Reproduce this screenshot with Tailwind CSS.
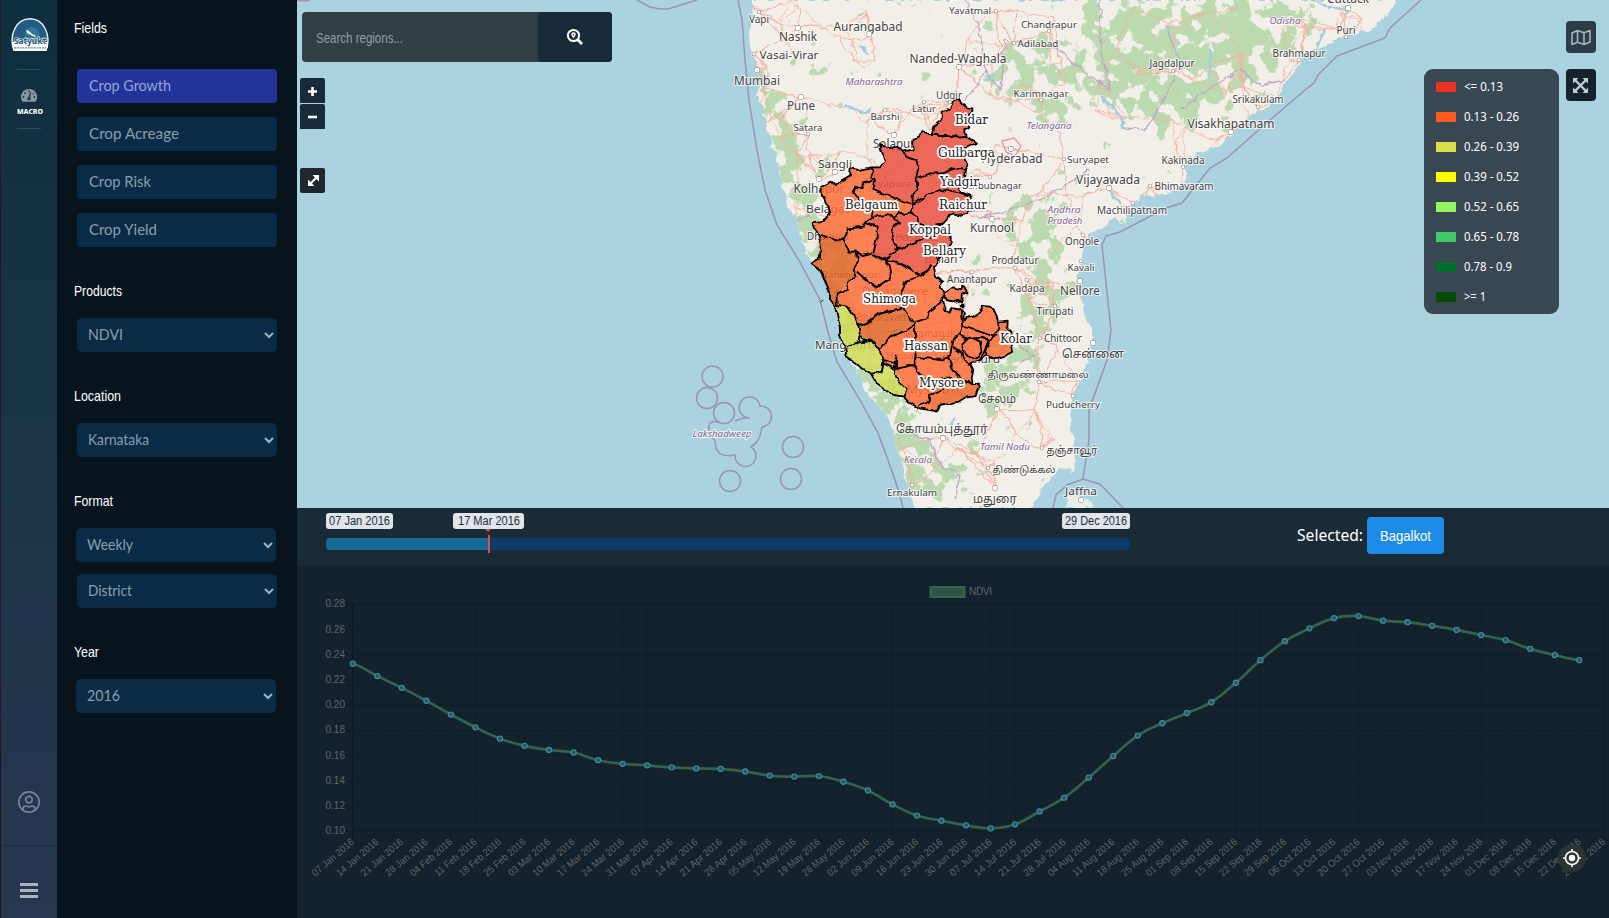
<!DOCTYPE html>
<html lang="en">
<head>
<meta charset="utf-8">
<title>Crop Growth</title>
<script src="https://cdn.jsdelivr.net/npm/@tailwindcss/browser@4"></script>
</head>
<body class="flex h-screen w-screen overflow-hidden bg-[#07141e] font-['Liberation_Sans',sans-serif]">

<nav class="flex h-full w-[57px] shrink-0 flex-col items-center border-l border-[#2a1620] bg-linear-to-b from-[#0e2f3f] via-[#1b3448] to-[#28364f]">
  <svg class="mt-[18px] ml-[1px] shrink-0" width="38" height="33" viewBox="0 0 38 33">
    <path d="M3 32.5C-3 16 6 .8 19 .8S41 16 35 32.5Z" fill="#245b83" stroke="#eef3f6" stroke-width="1.4"/>
    <circle cx="21" cy="16" r="7" fill="#3c82a3" opacity=".7"/>
    <path d="M15 12l3 1 3 3 4 2-1 1-4-2-4-2z" fill="#fff"/>
    <path d="M1 24H37V29L35 32.5H3L1 28Z" fill="#fff"/>
    <text x="3" y="25.500" textLength="32" lengthAdjust="spacingAndGlyphs" font-family="Noto Sans, sans-serif" font-weight="700" font-size="9.500" fill="#235173" stroke="#fff" stroke-width="1.2" paint-order="stroke">Satyukt</text>
    <path d="M3 29.8H35" stroke="#5f8aa3" stroke-width="1.3" stroke-dasharray="2 .8"/>
  </svg>
  <div class="mt-[18px] h-px w-6 bg-[#2f4d5c]"></div>
  <svg class="mt-[19px] shrink-0" width="16" height="13" viewBox="0 0 16 13">
    <path d="M8 0a8 8 0 0 1 6.9 12.1q-.3.6-1 .6H2.100q-.7 0-1-.6A8 8 0 0 1 8 0Z" fill="#8797a2"/>
    <g fill="#18384a"><circle cx="8" cy="2.400" r=".9"/><circle cx="4" cy="4.200" r=".9"/><circle cx="2.400" cy="8" r=".9"/><circle cx="13.500" cy="8" r=".9"/><circle cx="12.300" cy="4.800" r=".8"/><circle cx="8" cy="9.800" r="1.700"/></g>
    <path d="M8 9.500L9.600 3.500" stroke="#18384a" stroke-width="1.300"/>
  </svg>
  <div class="mt-[4px] ml-[2px] flex h-3 items-center font-['Noto_Sans',sans-serif] text-[7.500px] leading-3 font-extrabold text-white"><span data-w="26">MACRO</span></div>
  <div class="mt-[10px] h-px w-6 bg-[#2f4d5c]"></div>
  <div class="grow"></div>
  <svg class="shrink-0" width="24" height="24" viewBox="0 0 24 24" fill="none" stroke="#73839a" stroke-width="1.700">
    <circle cx="12" cy="12" r="10.200"/><circle cx="12" cy="9.600" r="3.300"/><path d="M5.500 19.500q.5-3.500 3.500-3.500l3 .8 3-.8q3 0 3.500 3.500"/>
  </svg>
  <div class="mt-[31px] h-px w-full bg-[#1d2c43]"></div>
  <div class="mt-[37px] mb-5 flex flex-col gap-[3px]">
    <i class="block h-[3px] w-[18px] bg-[#a9b2bd]"></i><i class="block h-[3px] w-[18px] bg-[#a9b2bd]"></i><i class="block h-[3px] w-[18px] bg-[#a9b2bd]"></i>
  </div>
</nav>

<aside class="flex h-full w-[240px] shrink-0 flex-col bg-[#07141e] pl-[17px] text-white">
  <h2 class="mt-4 flex h-6 items-center text-[14.500px]"><span data-w="33">Fields</span></h2>
  <div class="mt-[29px] ml-[3px] flex w-[200px] flex-col gap-[14px] font-['Lato',sans-serif] text-[15px] text-[#8b9eac]">
    <button class="flex h-[34px] items-center rounded-[4px] bg-[#233399] pl-3 text-[#9ba3d3]"><span data-w="82">Crop Growth</span></button>
    <button class="flex h-[34px] items-center rounded-[4px] bg-[#0a2b45] pl-3"><span data-w="90">Crop Acreage</span></button>
    <button class="flex h-[34px] items-center rounded-[4px] bg-[#0a2b45] pl-3"><span data-w="62">Crop Risk</span></button>
    <button class="flex h-[34px] items-center rounded-[4px] bg-[#0a2b45] pl-3"><span data-w="68">Crop Yield</span></button>
  </div>
  <h2 class="mt-8 flex h-6 items-center text-[14.500px]"><span data-w="48">Products</span></h2>
  <div class="sel mt-[15px] ml-[3px] flex h-[34px] w-[200px] items-center justify-between rounded-[5px] bg-[#0a2b45] pr-[3px] pl-[11px] font-['Lato',sans-serif] text-[15px] text-[#8b9eac]"><span data-w="35">NDVI</span></div>
  <h2 class="mt-8 flex h-6 items-center text-[14.500px]"><span data-w="47">Location</span></h2>
  <div class="sel mt-[15px] ml-[3px] flex h-[34px] w-[200px] items-center justify-between rounded-[5px] bg-[#0a2b45] pr-[3px] pl-[11px] font-['Lato',sans-serif] text-[15px] text-[#8b9eac]"><span data-w="61">Karnataka</span></div>
  <h2 class="mt-8 flex h-6 items-center text-[14.500px]"><span data-w="39">Format</span></h2>
  <div class="sel mt-[15px] ml-[2px] flex h-[34px] w-[200px] items-center justify-between rounded-[5px] bg-[#0a2b45] pr-[3px] pl-[11px] font-['Lato',sans-serif] text-[15px] text-[#8b9eac]"><span data-w="46">Weekly</span></div>
  <div class="sel mt-3 ml-[3px] flex h-[34px] w-[200px] items-center justify-between rounded-[5px] bg-[#0a2b45] pr-[3px] pl-[11px] font-['Lato',sans-serif] text-[15px] text-[#8b9eac]"><span data-w="44">District</span></div>
  <h2 class="mt-8 flex h-6 items-center text-[14.500px]"><span data-w="25">Year</span></h2>
  <div class="sel mt-[15px] ml-[2px] flex h-[34px] w-[200px] items-center justify-between rounded-[5px] bg-[#0a2b45] pr-[3px] pl-[11px] font-['Lato',sans-serif] text-[15px] text-[#8b9eac]"><span data-w="33">2016</span></div>
</aside>

<main class="flex h-full min-w-0 flex-1 flex-col">
  <section class="relative h-[508px] shrink-0 overflow-hidden bg-[#abd3df]">
    <svg class="block" width="1312" height="508" viewBox="297 0 1312 508">
      <defs>
        <filter id="rough" filterUnits="userSpaceOnUse" x="700" y="-20" width="760" height="560"><feTurbulence type="fractalNoise" baseFrequency=".12" numOctaves="2" seed="4"/><feDisplacementMap in="SourceGraphic" scale="7" xChannelSelector="R" yChannelSelector="G"/></filter>
        <filter id="ragged" filterUnits="userSpaceOnUse" x="-40" y="0" width="900" height="1100"><feTurbulence type="fractalNoise" baseFrequency=".05" numOctaves="1" seed="9"/><feDisplacementMap in="SourceGraphic" scale="17" xChannelSelector="R" yChannelSelector="G"/></filter>
        <filter id="woods" filterUnits="userSpaceOnUse" x="700" y="0" width="720" height="508">
          <feGaussianBlur in="SourceAlpha" stdDeviation="9" result="a"/>
          <feTurbulence type="fractalNoise" baseFrequency=".06" numOctaves="5" seed="12" result="n"/>
          <feColorMatrix in="n" values="0 0 0 0 0  0 0 0 0 0  0 0 0 0 0  1 0 0 0 0" result="m"/>
          <feComposite in="a" in2="m" operator="arithmetic" k1="0" k2=".42" k3="1.150" k4="-.32"/>
          <feComponentTransfer result="t"><feFuncA type="linear" slope="14" intercept="-7.500"/></feComponentTransfer>
          <feFlood flood-color="#bcdab0"/><feComposite in2="t" operator="in"/>
        </filter>
        <clipPath id="land"><path d="M752 0L753 20 748 35 752 55 757 70 760 85 757 95 763 110 768 130 772 145 778 165 783 185 788 205 797 222 800 235 806 250 812 265 829 280 835 303 842 330 847 352 857 372 866 392 877 404 885 412 893 432 897 450 903 465 908 485 914 508H1031L1045 483 1052 475 1060 468 1074 471 1075 445 1072 430 1071 410 1073 395 1080 380 1088 360 1093 343 1092 330 1085 318 1081 297 1078 277 1083 251 1088 234 1102 228 1117 217 1120 223 1127 222 1128 213 1135 203 1140 196 1160 195 1180 189 1187 179 1187 170 1182 160 1195 155 1220 145 1233 133 1250 115 1268 107 1275 98 1285 85 1295 72 1303 58 1310 52 1325 45 1345 36 1372 30 1380 20 1390 12 1396 0Z"/></clipPath>
      </defs>
      <g filter="url(#rough)"><rect x="740" y="-10" width="670" height="530" fill="#f2efe9" clip-path="url(#land)"/></g>
      <g clip-path="url(#land)">
        <g filter="url(#woods)" fill="#000">
          <path d="M1085 0H1320L1290 60 1220 110 1160 140 1090 90 1070 40Z"/>
          <path d="M1110 0H1220L1200 80 1110 60Z"/>
          <path d="M750 60L785 90 830 220 880 370 920 410 940 500 910 500 870 400 830 320 790 220 765 140Z"/>
          <path d="M980 60L1050 30 1090 90 1060 130 1000 100Z" opacity=".8"/>
          <path d="M1000 215L1060 170 1070 300 1040 380 1000 420 960 400 990 340 1030 290Z" opacity=".8"/>
          <path d="M915 455L985 460 980 480 950 485 920 475Z"/><path d="M900 10H930V-10H900Z"/><path d="M810 55L840 60 830 75 800 70Z"/>
        </g>
        <g id="roads" fill="none" stroke="#f5ae9d" stroke-width=".9" opacity=".95" filter="url(#rough)"></g>
        <path d="M965 0L980 30 985 70 978 85 960 105 945 100M985 70L1000 90 1005 40 1060 50 1080 70 1110 90 1100 40 1100 0M1165 25L1180 60 1170 90 1145 130 1125 128M1180 110L1215 85 1240 70 1260 85 1285 80M790 225L810 215M1000 220L980 218 1040 200 1090 170M1015 345L1035 355 1020 362M905 430L930 440 940 465 960 475 955 500" fill="none" stroke="#c0a8c5" stroke-width="1.400" filter="url(#rough)"/>
        <path d="M1100 95L1120 115 1125 130M1210 50V80M860 45L870 55M845 105L860 112 870 110M995 75L985 80M1110 188L1120 205M1310 0L1350 12M1325 30L1317 48M955 418L950 425" fill="none" stroke="#9fcfdf" stroke-width="2.500" filter="url(#rough)"/>
        <path d="M1002 141L1014 138 1021 146 1015 156 1006 152Z" fill="none" stroke="#ea92a5" stroke-width="1.300"/>
      </g>
      <path d="M1065 508L1070 494 1088 499 1093 508" fill="#e6eee8" filter="url(#rough)"/>
      <g fill="none" stroke="#9a93b3" stroke-width="1.500">
        <path d="M738 0L742 20 745 60 749 100 757 150 765 190 777 225 800 262 820 300 828 332 837 362 860 400 878 433 888 460 900 495 903 508M1421 0L1390 28 1385 38 1337 56 1318 75 1314 83 1305 90 1270 120 1227 158 1210 168 1182 203 1166 208 1120 232 1106 236 1102 245 1111 330 1107 360 1089 410 1089 440 1083 479M1053 508L1056 495 1067 485 1083 479 1100 484 1123 508M637 0L650 7 660 9 668 9 697 0M297 0Q303 2 310 0"/>
        <circle cx="712.500" cy="376.500" r="10.500"/><circle cx="707" cy="398" r="10.500"/><circle cx="793" cy="447" r="10.500"/><circle cx="791" cy="479" r="10.500"/><circle cx="730" cy="481" r="10.500"/><circle cx="724" cy="413" r="10.500"/>
        <path d="M750 418A10.500 10.500 0 1 1 760 406A10.500 10.500 0 1 1 762 427C760 440 756 444 751 447A10.500 10.500 0 1 1 735 455Q715 459 715 441Q706 430 710 423Q716 420 720 423M735 421Q746 417 750 418"/>
      </g>
      <g id="cities" font-family="'Noto Sans','Noto Sans Tamil',sans-serif" fill="#43403e" stroke="#fff" stroke-opacity=".75" stroke-width="2" paint-order="stroke" text-anchor="middle"></g>

      <g transform="translate(780 80) scale(.33333)" filter="url(#ragged)">
        <clipPath id="kar"><path id="ko" d="M537 58L548 72 560 82 575 85 572 105 560 120 568 140 556 150 556 168 575 178 588 188 570 198 555 205 545 225 555 240 562 255 558 270 555 290 535 320 545 338 575 348 565 360 562 375 565 400 545 405 520 400 505 405 500 420 480 435 500 455 512 470 512 490 505 515 470 535 472 552 462 560 468 590 490 605 478 620 492 640 485 660 495 670 492 690 510 698 520 685 545 690 555 700 553 718 575 710 605 695 605 678 630 680 648 700 655 725 683 722 682 745 695 760 690 785 697 815 680 825 660 832 640 835 620 825 605 840 585 845 570 850 580 870 575 895 578 912 590 912 600 920 590 945 560 950 535 965 500 970 480 975 470 995 450 990 420 985 400 975 385 965 370 950 340 945 320 930 290 910 272 880 240 860 200 832 195 800 180 770 180 740 170 700 165 680 150 660 150 640 135 600 120 570 95 550 120 535 122 490 115 465 100 440 98 430 130 425 150 400 145 380 125 345 125 320 155 305 165 315 210 290 212 265 240 270 270 262 300 262 315 245 300 195 325 205 350 200 370 215 400 208 400 180 430 155 455 165 460 140 485 120 485 95 510 85 520 65Z"/></clipPath>
        <g clip-path="url(#kar)" opacity=".84">
          <rect x="80" y="40" width="640" height="970" fill="#ff6d38"/>
          <path d="M120 462L190 480 205 515 230 515 235 540 225 590 205 605 170 640 170 680 90 640 80 500Z" fill="#e46428"/>
          <path d="M235 735L300 700 370 685 405 728 330 770 300 810 240 770Z" fill="#e46428"/>
          <path d="M450 960L450 945 490 930 540 905 610 905 600 960 470 1000Z" fill="#f0662d"/>
          <path d="M270 262L315 245 290 190 400 140 500 50 600 80 600 420 500 430 530 520 470 535 455 555 420 585 380 560 310 540 275 525 290 480 290 440 262 420 345 408 395 400 395 372 280 330 285 300Z" fill="#eb503f"/>
          <path d="M150 678L200 680 230 730 240 768 275 780 300 815 310 848 340 865 345 830 350 880 380 930 370 955 270 920 180 850 150 720Z" fill="#d1dc54"/>
        </g>
        <g fill="none" stroke="#000" stroke-width="5.500" stroke-linejoin="round">
          <use href="#ko"/>
          <path d="M455 165L500 165 530 170 556 168M370 215L375 230 410 240 415 265 410 290 412 330 398 345 398 372M415 295L450 280 490 280 520 265 558 270M400 372L440 345 480 330 530 335 575 348M398 372L395 400 415 410 410 430 450 440 480 435M270 262L280 275 270 290 285 300 280 330 330 350 395 372M285 295L250 310 245 325 225 320 220 340 235 350 240 370 275 390 280 410 320 405 345 410 355 395 370 405 395 400M120 465L150 475 190 480 200 460 200 445 250 440 260 425 280 412M260 430L290 440 290 480 280 520M340 415L360 430 340 440 335 470 350 505 340 520 310 540 275 525M190 480L200 500 205 515 230 515 245 525 275 518M230 515L235 540 225 565 225 590 205 605 200 630 170 640 170 675 200 680 225 710 235 735 240 768 235 785 200 800M340 505L380 500 420 480 480 460M230 575L260 600 290 625 310 610 325 600 330 570 320 545M310 540L350 545 380 560 420 585 440 575 455 555M420 585L380 605 365 640 370 680 400 725 410 725 440 715 455 690 485 660M235 735L260 730 300 700 350 690 370 680M200 800L235 785 275 780 300 815 310 845 305 875 272 882M240 770L280 790M300 810L330 770 370 755 410 730M310 840L345 850 355 865 400 855 410 825 405 790 405 735M305 875L310 850 340 865 350 830 345 880 360 910 380 930 370 950M400 855L410 870 430 895 470 900M545 690L550 740 540 760 520 780 515 800 510 830 480 840 410 830M548 740L600 755 640 770 655 745 655 725M540 765L560 775 600 770 625 780 610 820 600 840M550 790L570 770 600 785 605 815 590 835 560 825 545 810ZM520 800L545 820 550 840 570 850M505 835L520 870 550 900 578 912M415 975L450 960 450 945 490 930 480 900 500 895 540 900 578 912M655 765L635 775 615 810 620 825"/>
          <path d="M490 640L520 622 545 628 547 620 562 628 562 640 545 645 545 660 525 665 500 660Z" fill="#fc8053"/>
          <path d="M543 670l8 2-2 10-7-4zM126 662l3 2"/>
        </g>
      </g>
      <g id="dist" font-family="'DejaVu Serif',serif" font-size="13" fill="#222" stroke="#fff" stroke-width="3.500" stroke-linejoin="round" paint-order="stroke"></g>
    </svg>

    <div class="absolute top-3 left-[5px] flex h-[50px] w-[310px] rounded-[4px] bg-[#313f45]">
      <div class="flex flex-1 items-center pt-[2px] pl-[14px] text-[15px] text-[#929b9f]"><span data-w="87">Search regions...</span></div>
      <div class="flex w-[74px] items-center justify-center rounded-[4px] bg-[#192b3a]">
        <svg width="18" height="18" viewBox="0 0 18 18" fill="none" stroke="#fff"><circle cx="7.500" cy="7.500" r="5.600" stroke-width="2"/><path d="M11.500 11.500L16 16" stroke-width="2.800"/><path d="M7.500 10.500Q5.200 7.800 5.200 6.600a2.300 2.300 0 0 1 4.600 0Q9.800 7.800 7.500 10.500Z" fill="#fff" stroke="none"/><circle cx="7.500" cy="6.700" r=".8" fill="#192b3a" stroke="none"/></svg>
      </div>
    </div>
    <div class="absolute top-[78px] left-[3px] flex w-[25px] flex-col gap-px">
      <div class="flex h-[25px] items-center justify-center rounded-t-[2px] bg-[#192b3a] pt-[2px]"><svg width="9" height="9"><path d="M0 4.500H9M4.500 0V9" stroke="#fff" stroke-width="2.600"/></svg></div>
      <div class="flex h-[25px] items-center justify-center rounded-t-[2px] bg-[#192b3a]"><svg width="9" height="9"><path d="M0 5H9" stroke="#fff" stroke-width="2.600"/></svg></div>
    </div>
    <div class="absolute top-[168px] left-[3px] flex h-[25px] w-[25px] items-center justify-center rounded-[2px] bg-[#20282e]">
      <svg class="ml-px" width="11" height="11" viewBox="0 0 11 11"><path d="M2 9L9 2" stroke="#fff" stroke-width="2.200"/><path d="M4.500 0H11V6.500ZM0 4.500V11H6.500Z" fill="#fff"/></svg>
    </div>

    <div class="absolute top-[21px] right-[13px] flex w-[30px] flex-col gap-4">
      <div class="flex h-8 items-center justify-center rounded-[4px] bg-[#2c3d49]"><svg width="20" height="17" viewBox="0 0 20 17" fill="none" stroke="#a8b3bc" stroke-width="1.600" stroke-linejoin="round"><path d="M1 4L6.500 1.500 13 3.800 19 1.500V13L13 15.500 6.500 13.200 1 15.500ZM6.500 1.500V13M13 4V15.500"/></svg></div>
      <div class="flex h-8 items-center justify-center rounded-[4px] bg-[#15232d] pr-px"><svg width="15" height="15" viewBox="0 0 15 15"><path d="M2 2L13 13M13 2L2 13" stroke="#c2ccd3" stroke-width="2.400"/><path d="M0 0H5.500L0 5.500ZM15 0V5.500L9.500 0ZM0 15V9.500L5.500 15ZM15 15H9.500L15 9.500Z" fill="#c2ccd3"/></svg></div>
    </div>

    <div class="absolute top-[69px] right-[50px] flex h-[245px] w-[135px] flex-col rounded-[9px] bg-[#394753] pt-[3px] pl-3 font-['Noto_Sans',sans-serif] text-[12px] text-white">
      <div class="flex h-[29.950px] items-center gap-2"><i class="mt-px h-[10px] w-5 bg-[#ea3323]"></i><span data-w="39">&lt;= 0.13</span></div>
      <div class="flex h-[29.950px] items-center gap-2"><i class="mt-px h-[10px] w-5 bg-[#fc5a20]"></i><span data-w="55">0.13 - 0.26</span></div>
      <div class="flex h-[29.950px] items-center gap-2"><i class="mt-px h-[10px] w-5 bg-[#dede4b]"></i><span data-w="55">0.26 - 0.39</span></div>
      <div class="flex h-[29.950px] items-center gap-2"><i class="mt-px h-[10px] w-5 bg-[#ffff00]"></i><span data-w="55">0.39 - 0.52</span></div>
      <div class="flex h-[29.950px] items-center gap-2"><i class="mt-px h-[10px] w-5 bg-[#94f45a]"></i><span data-w="55">0.52 - 0.65</span></div>
      <div class="flex h-[29.950px] items-center gap-2"><i class="mt-px h-[10px] w-5 bg-[#41ca69]"></i><span data-w="55">0.65 - 0.78</span></div>
      <div class="flex h-[29.950px] items-center gap-2"><i class="mt-px h-[10px] w-5 bg-[#006d2c]"></i><span data-w="48">0.78 - 0.9</span></div>
      <div class="flex h-[29.950px] items-center gap-2"><i class="mt-px h-[10px] w-5 bg-[#064a06]"></i><span data-w="22">&gt;= 1</span></div>
    </div>
  </section>

  <section class="flex h-[58px] shrink-0 bg-[#1a2b38] pl-[29px]">
    <div class="relative w-[804px] pt-[5px]">
      <div class="flex justify-between text-[12px] leading-4 text-[#24313c]">
        <span class="flex h-4 w-[67px] items-center justify-center rounded-[3px] bg-[#e1e4e9]"><span data-w="61">07 Jan 2016</span></span>
        <span class="flex h-4 w-[68px] items-center justify-center rounded-[3px] bg-[#e1e4e9]"><span data-w="62">29 Dec 2016</span></span>
      </div>
      <div class="mt-[9px] h-3 overflow-hidden rounded-[4px] bg-[#0b3d66]"><div class="h-full w-[163px] bg-[#146a93]"></div></div>
      <span class="absolute top-[5px] left-[127px] flex h-4 w-[71px] items-center justify-center rounded-[3px] bg-[#e1e4e9] text-[12px] text-[#24313c]"><span data-w="62">17 Mar 2016</span></span>
      <svg class="absolute top-[21px] left-[159px]" width="7" height="3"><path d="M0 0H6L3 3Z" fill="#e8464f"/></svg>
      <i class="absolute top-[27px] left-[162px] h-[18px] w-[2px] bg-[#e8464f]"></i>
    </div>
    <div class="ml-[167px] flex items-start pt-[9px]">
      <div class="flex h-[37px] w-[70px] items-center font-['Noto_Sans',sans-serif] text-[16px] text-white"><span data-w="66">Selected:</span></div>
      <div class="flex h-[37px] w-[77px] items-center justify-center rounded-[4px] bg-[#1d8ce8] text-[15.500px] text-white"><span data-w="51">Bagalkot</span></div>
    </div>
  </section>

  <section class="relative min-h-0 flex-1 bg-[#13222d]">
    <svg id="chart" class="block" width="1312" height="352" viewBox="297 566 1312 352" font-family="'Liberation Sans',sans-serif" font-size="10" fill="#626466"></svg>
    <div class="absolute top-[278px] left-[1261px] flex h-7 w-7 items-center justify-center rounded-full bg-[#2b3430]">
      <svg width="18" height="18" viewBox="0 0 18 18" fill="none" stroke="#fff" stroke-width="1.600"><circle cx="9" cy="9" r="6.500"/><circle cx="9" cy="9" r="3.200" fill="#fff" stroke="none"/><path d="M9 0V3M9 15V18M0 9H3M15 9H18"/></svg>
    </div>
  </section>
</main>

<script>
const NS = 'http://www.w3.org/2000/svg';
function add(parent, tag, attrs, text) {
  const e = document.createElementNS(NS, tag);
  for (const k in attrs) e.setAttribute(k, attrs[k]);
  if (text !== undefined) e.textContent = text;
  parent.appendChild(e);
  return e;
}
document.querySelectorAll('[data-w]').forEach(el => {
  const t = el.textContent, w = el.dataset.w;
  el.textContent = '';
  el.style.flexShrink = 0;
  const s = add(el, 'svg', { width: w, height: '1em', style: 'display:block;overflow:visible' });
  add(s, 'text', { x: 0, y: '.83em', textLength: w, lengthAdjust: 'spacingAndGlyphs', fill: 'currentColor' }, t);
});
document.querySelectorAll('.sel').forEach(s => {
  const v = add(s, 'svg', { width: 10, height: 7, viewBox: '0 0 10 7' });
  add(v, 'path', { d: 'M1 1L5 5 9 1', fill: 'none', stroke: '#a3b2bf', 'stroke-width': 2 });
});

// [name, x centre, baseline, width, size, dot x, dot y]
const cities = [
  ['Vapi',759,23,20,10,759,12],['Aurangabad',868,31,69,12.5,869,34],['Yavatmal',970,14,42,9.5,996,11],['Chandrapur',1049,28,56,9.5,1049,31],
  ['Nashik',798,41,38,12,798,28],['Vasai-Virar',789,59,59,11,754,54],['Adilabad',1038,47,41,9.5,1014,43],['Nanded-Waghala',958,63,97,12,959,67],
  ['Mumbai',757,85,46,12.5,757,70],['Karimnagar',1041,97,55,9.5,1041,100],['Udgir',949,99,26,10,950,102],['Latur',924,112,24,9.5,924,102],
  ['Pune',801,110,28,12.5,801,97],['Barshi',885,120,29,9.5,885,110],['Satara',808,131,29,9.5,808,134],['Solapur',894,148,42,12,894,135],
  ['Hyderabad',1012,163,61,12,1011,149],['Sangli',835,168,34,11.5,835,172],['Suryapet',1088,163,42,9.5,1064,159],['Kolhapur',819,193,51,12,819,179],
  ['Mahbubnagar',990,189,64,9.5,990,177],['Vijayapura',886,187,50,9.5,886,173],['Vijayawada',1108,184,64,12,1109,188],['Raichur',960,212,34,9,0,0],
  ['Belagavi',830,213,48,11.5,831,218],['Dharwad',828,240,42,10,854,236],['Kurnool',992,232,44,12,992,219],['Hosapete',917,241,43,10,0,0],['Ongole',1082,245,34,10,1083,235],
  ['Ballari',941,263,33,11,0,0],['Ranebennur',850,278,56,9.5,882,274],['Anantapur',972,283,50,10,972,272],['Proddatur',1015,264,47,10,1015,268],['Kavali',1081,271,27,9.5,1081,261],
  ['Davanagere',895,295,66,11.5,895,281],['Kadapa',1027,292,35,10,1027,280],['Nellore',1080,295,40,12,1080,281],['Bhadravathi',884,321,55,10,884,308],
  ['Tirupati',1055,315,37,10,1055,306],['Chikkamagaluru',931,337,76,10,889,333],['Chittoor',1063,342,38,10,1040,338],['Mangaluru',845,349,60,11.500,0,0],
  ['Hassan',903,359,33,9.5,0,0],['Bengaluru',971,363,58,11.500,971,348],['சென்னை',1093,358,62,12,1093,343],['திருவண்ணாமலை',1038,378,101,9.5,1039,382],
  ['Mysuru',928,394,42,12,0,0],['சேலம்',997,403,38,12,997,409],['Puducherry',1073,408,54,9.5,1073,396],['கோயம்புத்தூர்',942,433,92,12,943,438],
  ['தஞ்சாவூர்',1072,454,51,11,1042,448],['திண்டுக்கல்',1024,473,63,9.5,988,468],['Ernakulam',912,496,50,9.5,912,485],['மதுரை',995,503,44,12,995,488],
  ['Jaffna',1081,495,32,11.5,1081,500],['Cuttack',1348,3,42,12,1348,8],['Puri',1346,34,19,10,1346,37],['Brahmapur',1299,57,53,10,1299,60],
  ['Jagdalpur',1172,67,45,10,1173,71],['Srikakulam',1258,103,51,10,1258,107],['Visakhapatnam',1231,128,87,12,1231,132],['Kakinada',1183,164,43,10,1183,167],
  ['Bhimavaram',1184,190,59,10,1150,186],['Machilipatnam',1132,214,70,10,1133,203]
];
const cg = document.getElementById('cities');
const hubs = [];
for (const [n, x, y, w, s, dx, dy] of cities) {
  add(cg, 'text', { x, y, 'font-size': s, textLength: w, lengthAdjust: 'spacingAndGlyphs' }, n);
  if (dx) {
    hubs.push([dx, dy]);
    add(cg, 'circle', { cx: dx, cy: dy, r: s > 11 ? 2.6 : 1.7, fill: '#fff', stroke: '#666', 'stroke-width': 1, 'stroke-opacity': 1 });
  }
}
for (const [n, x, y, w] of [['Maharashtra',874,85,57],['Telangana',1049,129,45],['Odisha',1285,24,31],['Andhra',1064,213,33],['Pradesh',1065,224,35],['Karnataka',877,258,46],['Lakshadweep',722,437,59],['Kerala',918,463,28],['Tamil Nadu',1005,450,50]])
  add(cg, 'text', { x, y, 'font-size': 9.5, textLength: w, lengthAdjust: 'spacingAndGlyphs', 'font-style': 'italic', fill: '#855f92' }, n);

// Road network: hubs plus seeded waypoints, each joined to its nearest neighbours
let seed = 7;
const rnd = () => (seed = (seed * 16807) % 2147483647) / 2147483647;
const pts = hubs.slice();
for (let i = 0; i < 300; i++) pts.push([745 + rnd() * 620, rnd() * 508]);
const roads = document.getElementById('roads');
pts.forEach((p, i) => {
  pts.map((q, j) => [Math.hypot(q[0] - p[0], q[1] - p[1]), j]).sort((a, b) => a[0] - b[0]).slice(1, 5).forEach(([d, j]) => {
    if (j < i && d > 5) return;
    const q = pts[j], mx = (p[0] + q[0]) / 2 + (rnd() - .5) * 9, my = (p[1] + q[1]) / 2 + (rnd() - .5) * 9;
    add(roads, 'path', { d: `M${p[0]} ${p[1]}Q${mx} ${my} ${q[0]} ${q[1]}`, 'stroke-width': i < hubs.length ? 1.1 : .8 });
  });
});

for (const [n, x, y, w] of [['Bidar',955,124,33],['Gulbarga',938,157,57],['Yadgir',940,186,39],['Belgaum',845,209,53],['Raichur',939,209,48],['Koppal',909,234,42],['Bellary',923,255,43],['Shimoga',863,303,53],['Kolar',1000,343,32],['Hassan',904,350,44],['Mysore',919,387,45]])
  add(document.getElementById('dist'), 'text', { x, y, textLength: w, lengthAdjust: 'spacingAndGlyphs' }, n);

// NDVI chart
const c = document.getElementById('chart');
const X0 = 352.8, DX = 24.53;
for (let i = 0; i <= 9; i++) {
  const y = 604.3 + i * 25.2;
  add(c, 'path', { d: `M345 ${y}H1604`, stroke: '#0d1a25', 'stroke-width': 1, opacity: .6 });
  add(c, 'text', { x: 345, y: y + 3, 'text-anchor': 'end' }, (0.28 - i * 0.02).toFixed(2));
}
const M = ['Jan','Feb','Mar','Apr','May','Jun','Jul','Aug','Sep','Oct','Nov','Dec'];
for (let i = 0; i <= 51; i++) {
  const x = X0 + i * DX, d = new Date(Date.UTC(2016, 0, 7 + i * 7));
  add(c, 'path', { d: `M${x} 604V840`, stroke: '#0d1a25', 'stroke-width': i ? 1 : 1.5, opacity: i ? .4 : 1 });
  add(c, 'text', { x: 0, y: 0, 'text-anchor': 'end', textLength: 52, lengthAdjust: 'spacingAndGlyphs', transform: `translate(${x + 2} 843) rotate(-40.5)` },
    String(d.getUTCDate()).padStart(2, '0') + ' ' + M[d.getUTCMonth()] + ' ' + d.getUTCFullYear());
}
const ys = [647,659,670.5,683,696.5,709,720,727,731,733.5,741,744.5,746,748,749,749.5,752,756,757,756.5,762,770.5,784,795,800,804.5,807.5,803.5,791,777.5,758,737,717,705,695,684.5,665.5,643.5,625,612.5,602.5,600.5,605,606.5,610,614,619,624,632.5,638.5,643.5].map(v => v * 1.0259);
let path = `M${X0} ${ys[0]}`;
const slope = i => (ys[Math.min(i + 1, 50)] - ys[Math.max(i - 1, 0)]) * .2;
for (let i = 0; i < 50; i++) {
  const x = X0 + i * DX;
  path += `C${x + DX * .4} ${ys[i] + slope(i)} ${x + DX * .6} ${ys[i + 1] - slope(i + 1)} ${x + DX} ${ys[i + 1]}`;
}
add(c, 'path', { d: path, fill: 'none', stroke: '#32634d', 'stroke-width': 2.7 });
ys.forEach((y, i) => add(c, 'circle', { cx: X0 + i * DX, cy: y, r: 2.6, fill: '#2a5a58', stroke: '#3f8bae', 'stroke-width': 1.1 }));
add(c, 'rect', { x: 930.5, y: 587, width: 34, height: 10, fill: '#2d5548', stroke: '#2f6a4c', 'stroke-width': 2 });
add(c, 'text', { x: 969, y: 594.5, textLength: 23 }, 'NDVI');
</script>
</body>
</html>
